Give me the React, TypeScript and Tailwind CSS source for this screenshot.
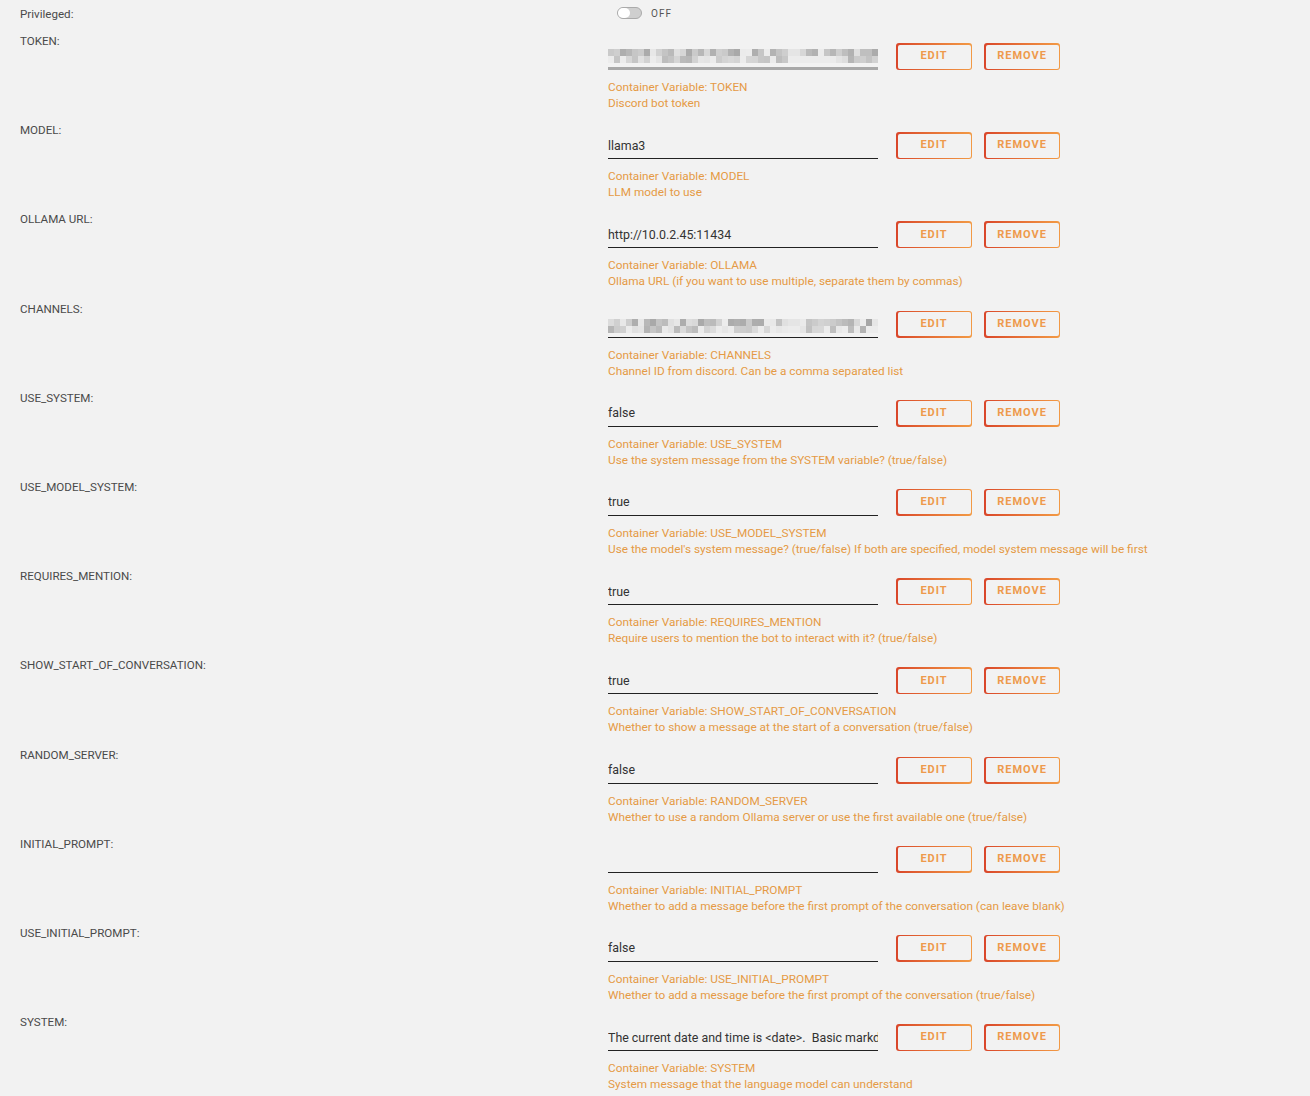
import React from "react";

type Variable = {
  label: string;
  name: string;
  value: string;
  description: string;
  blurred?: "token" | "channels";
};

const variables: Variable[] = [
  { label: "TOKEN:", name: "TOKEN", value: "", description: "Discord bot token", blurred: "token" },
  { label: "MODEL:", name: "MODEL", value: "llama3", description: "LLM model to use" },
  {
    label: "OLLAMA URL:",
    name: "OLLAMA",
    value: "http://10.0.2.45:11434",
    description: "Ollama URL (if you want to use multiple, separate them by commas)",
  },
  {
    label: "CHANNELS:",
    name: "CHANNELS",
    value: "",
    description: "Channel ID from discord. Can be a comma separated list",
    blurred: "channels",
  },
  {
    label: "USE_SYSTEM:",
    name: "USE_SYSTEM",
    value: "false",
    description: "Use the system message from the SYSTEM variable? (true/false)",
  },
  {
    label: "USE_MODEL_SYSTEM:",
    name: "USE_MODEL_SYSTEM",
    value: "true",
    description:
      "Use the model's system message? (true/false) If both are specified, model system message will be first",
  },
  {
    label: "REQUIRES_MENTION:",
    name: "REQUIRES_MENTION",
    value: "true",
    description: "Require users to mention the bot to interact with it? (true/false)",
  },
  {
    label: "SHOW_START_OF_CONVERSATION:",
    name: "SHOW_START_OF_CONVERSATION",
    value: "true",
    description: "Whether to show a message at the start of a conversation (true/false)",
  },
  {
    label: "RANDOM_SERVER:",
    name: "RANDOM_SERVER",
    value: "false",
    description: "Whether to use a random Ollama server or use the first available one (true/false)",
  },
  {
    label: "INITIAL_PROMPT:",
    name: "INITIAL_PROMPT",
    value: "",
    description: "Whether to add a message before the first prompt of the conversation (can leave blank)",
  },
  {
    label: "USE_INITIAL_PROMPT:",
    name: "USE_INITIAL_PROMPT",
    value: "false",
    description: "Whether to add a message before the first prompt of the conversation (true/false)",
  },
  {
    label: "SYSTEM:",
    name: "SYSTEM",
    value: "The current date and time is <date>.  Basic markdown is supported",
    description: "System message that the language model can understand",
  },
];

// pixelated "blur" over secret values
const Mosaic = ({ seed, cols, rows }: { seed: number; cols: number; rows: number }) => {
  let s = seed;
  const rand = () => {
    s = (s * 9301 + 49297) % 233280;
    return s / 233280;
  };
  return (
    <div className="flex flex-col">
      {Array.from({ length: rows }).map((_, r) => (
        <div key={r} className="flex">
          {Array.from({ length: cols }).map((_, c) => {
            const gap = c === 30 || c === 31 ? 0.85 : 0;
            const v = Math.round(165 + (gap || rand()) * 75 + r * 14);
            const g = Math.min(v, 236);
            return (
              <div
                key={c}
                className="h-[7px] w-[6px]"
                style={{ backgroundColor: `rgb(${g},${g},${g})` }}
              />
            );
          })}
        </div>
      ))}
    </div>
  );
};

const GradientButton = ({ children }: { children: React.ReactNode }) => (
  <div className="h-[27px] w-[76px] rounded-[3px] bg-gradient-to-r from-[#d9462a] to-[#f29a45] p-[1.5px]">
    <button className="flex h-full w-full items-center justify-center rounded-[2px] bg-[#f2f2f2] text-[11px] font-bold tracking-[1px] text-[#ee9a4c]">
      {children}
    </button>
  </div>
);

const Row = ({ v }: { v: Variable }) => (
  <div className="flex h-[89.2px]">
    <div className="w-[608px] pl-[20px] text-[11.6px] leading-[16px] text-[#4a4a4a]">{v.label}</div>
    <div className="flex flex-col pt-[10px]">
      <div className="flex items-start gap-[18px]">
        {v.blurred === "token" ? (
          <div className="flex h-[27px] w-[270px] flex-col justify-end">
            <Mosaic seed={7} cols={45} rows={2} />
            <div className="mt-[4px] h-[3px] w-[270px] bg-[#a8a8a8]" />
          </div>
        ) : v.blurred === "channels" ? (
          <div className="flex h-[27px] w-[270px] flex-col justify-end border-b border-[#222]">
            <Mosaic seed={13} cols={45} rows={2} />
            <div className="h-[4px]" />
          </div>
        ) : (
          <input
            readOnly
            value={v.value}
            className="h-[27px] w-[270px] border-b border-[#222] bg-transparent text-[12.4px] text-[#333] outline-none"
          />
        )}
        <div className="flex gap-[12px]">
          <GradientButton>EDIT</GradientButton>
          <GradientButton>REMOVE</GradientButton>
        </div>
      </div>
      <div className="mt-[9px] text-[11.8px] leading-[16px] text-[#e59a45]">
        <div>Container Variable: {v.name}</div>
        <div>{v.description}</div>
      </div>
    </div>
  </div>
);

export default function App() {
  return (
    <div
      className="min-h-[1096px] w-[1310px] bg-[#f2f2f2] pt-[6px]"
      style={{ fontFamily: "Roboto, 'Liberation Sans', sans-serif" }}
    >
      <div className="flex h-[27px]">
        <div className="w-[608px] pl-[20px] text-[11.6px] leading-[16px] text-[#4a4a4a]">Privileged:</div>
        <div className="flex h-[14px] items-center pl-[9px]">
          <div className="relative h-[12px] w-[25px] rounded-full border border-[#aaa] bg-[#cfcfcf]">
            <div className="absolute left-0 top-0 h-[10px] w-[12px] rounded-full bg-white" />
          </div>
          <span className="ml-[9px] text-[10px] tracking-[1px] text-[#555]">OFF</span>
        </div>
      </div>
      {variables.map((v) => (
        <Row key={v.name} v={v} />
      ))}
    </div>
  );
}
